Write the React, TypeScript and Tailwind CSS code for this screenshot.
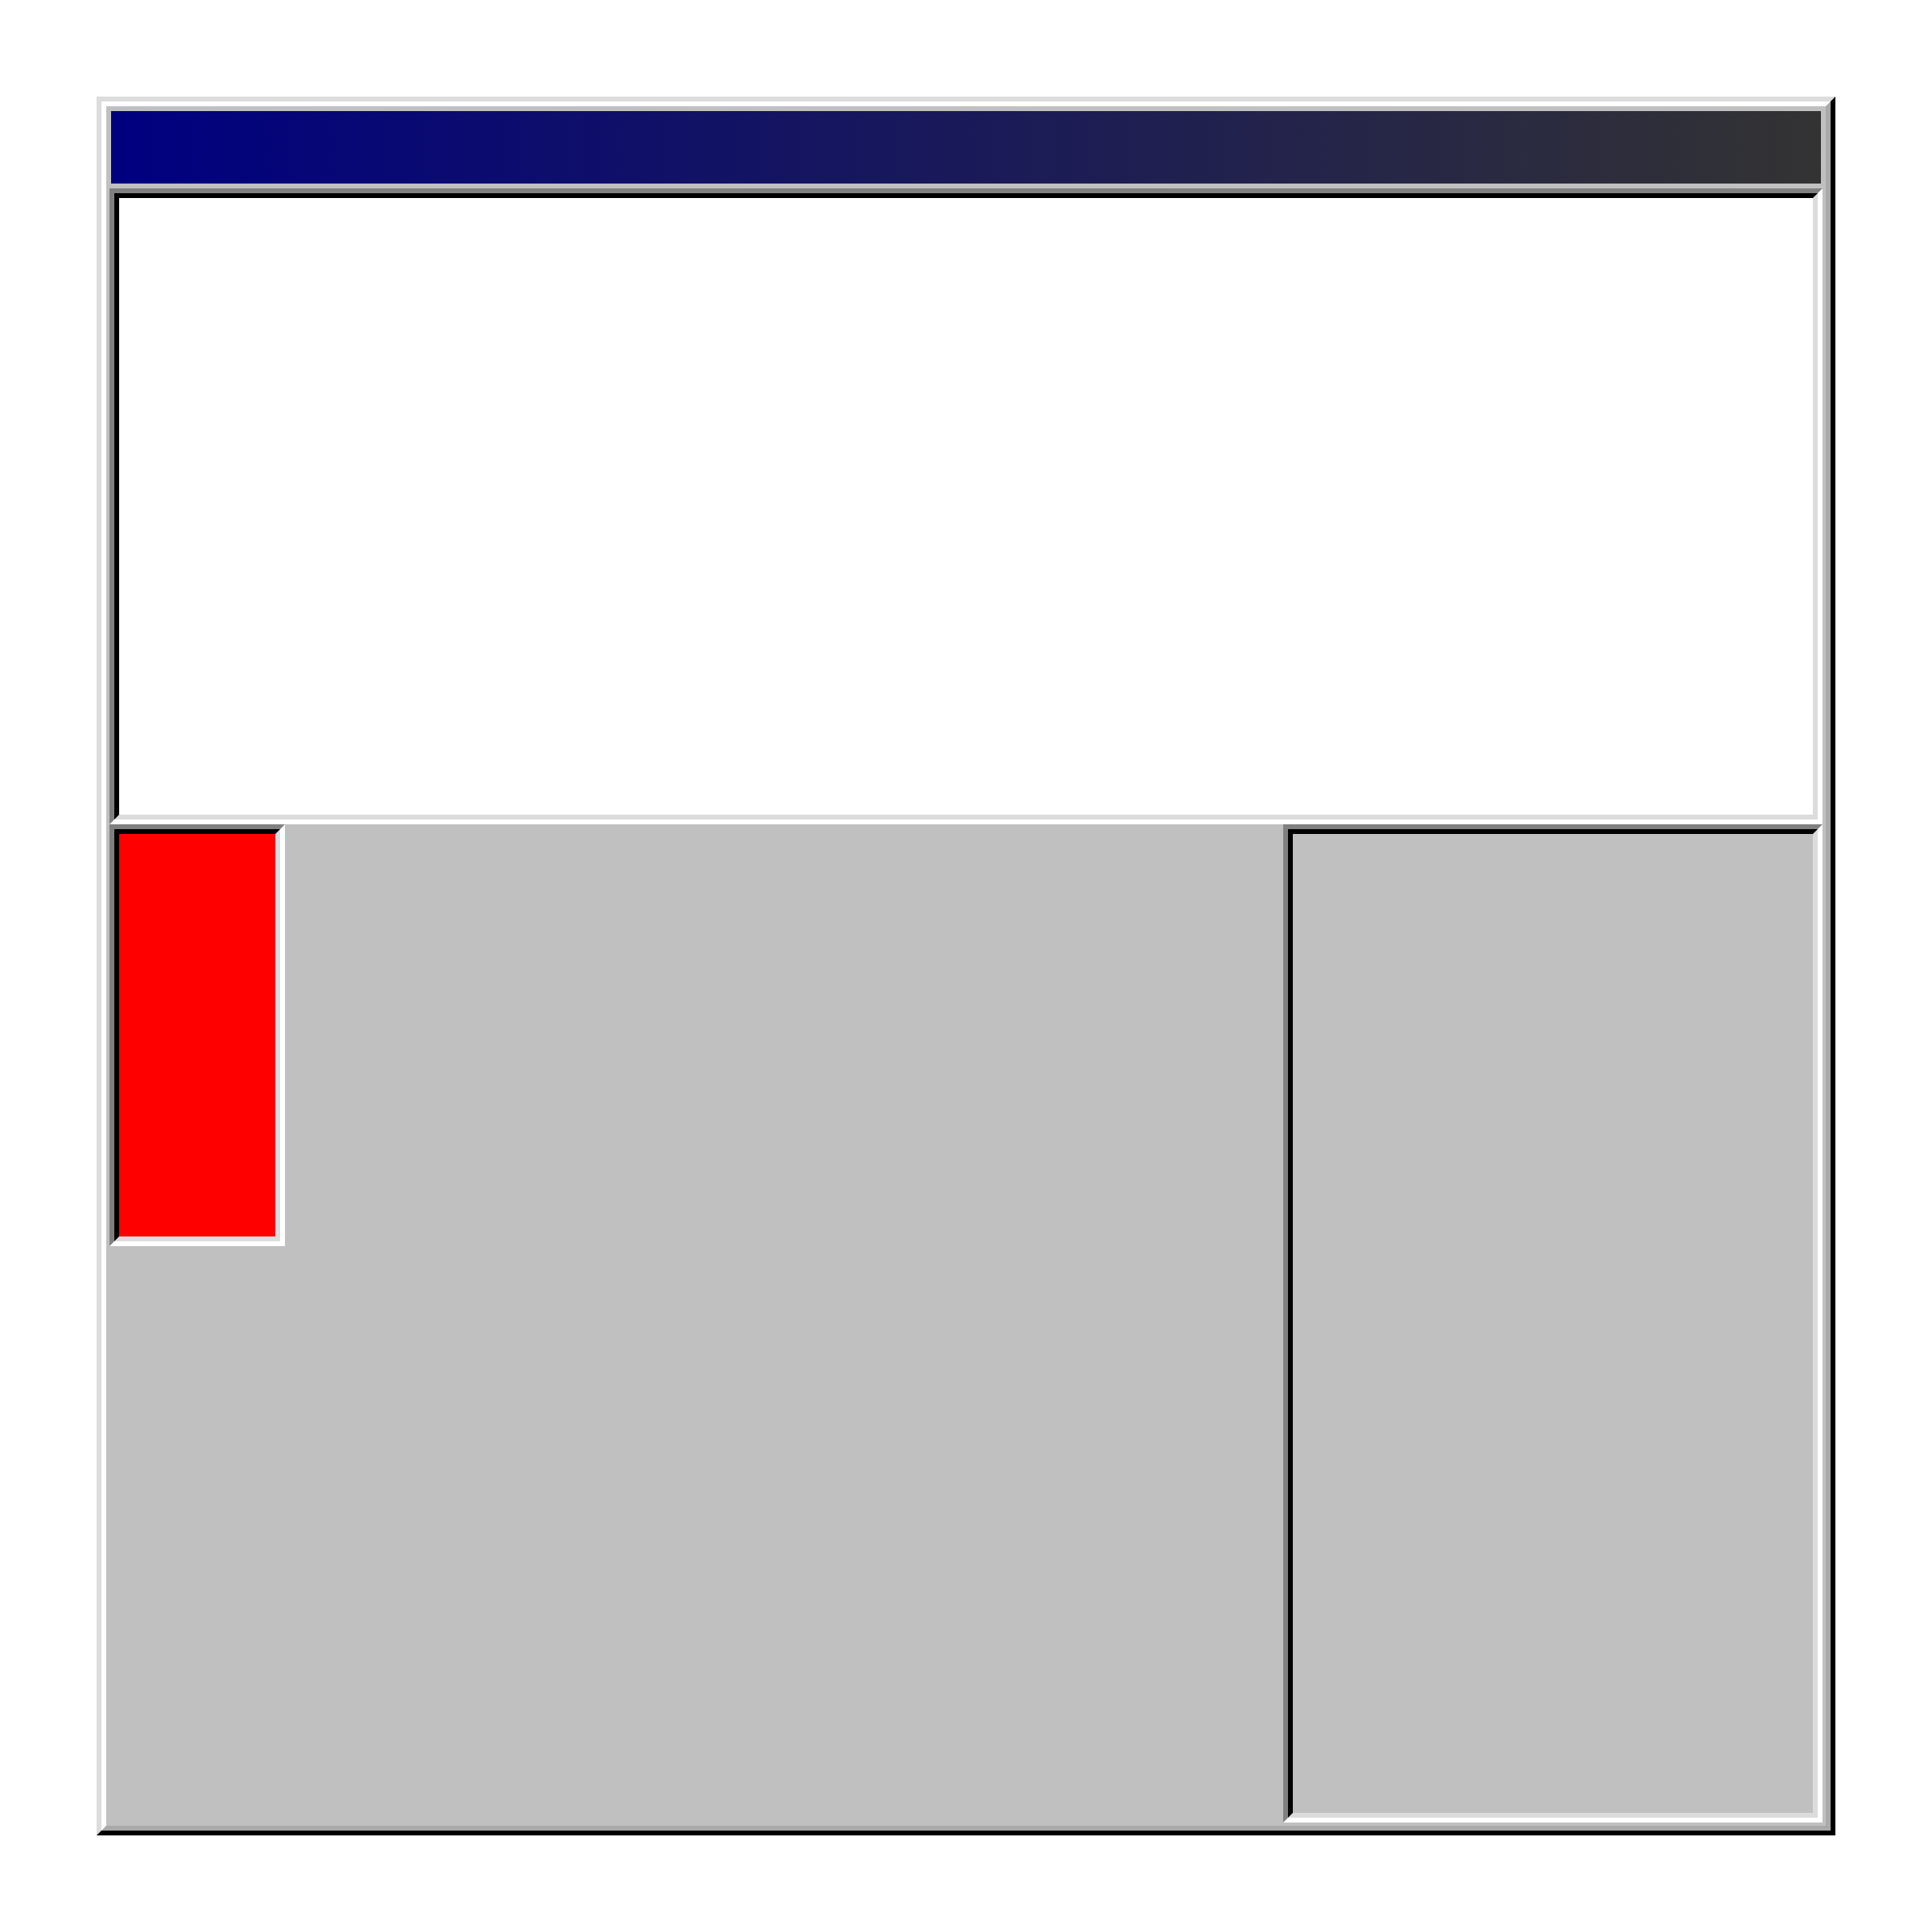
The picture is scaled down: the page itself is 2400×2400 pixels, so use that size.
import React from "react";

function Inset({ className, inner }: { className: string; inner: string }) {
  return (
    <div className={`border-[6px] border-t-[#808080] border-l-[#808080] border-b-white border-r-white ${className}`}>
      <div className={`h-full w-full border-[6px] border-t-black border-l-black border-b-[#dcdcdc] border-r-[#dcdcdc] ${inner}`} />
    </div>
  );
}

export default function App() {
  return (
    <div className="w-[2400px] h-[2400px] bg-white p-[120px]">
      <div className="w-[2160px] h-[2160px] border-[6px] border-t-[#dcdcdc] border-l-[#dcdcdc] border-b-black border-r-black">
        <div className="h-full w-full border-[6px] border-t-white border-l-white border-b-[#a9a9a9] border-r-[#a9a9a9]">
          <div className="h-full w-full bg-[#c0c0c0] p-[4px] flex flex-col">
            <div className="mx-[2px] mt-[2px] h-[90px] shrink-0 bg-[linear-gradient(to_right,#000080,#333333)]" />
            <Inset className="mt-[6px] h-[790px] shrink-0" inner="bg-white" />
            <div className="flex justify-between items-start">
              <Inset className="w-[218px] h-[524px]" inner="bg-[#ff0000]" />
              <Inset className="w-[670px] h-[1240px]" inner="bg-[#c0c0c0]" />
            </div>
          </div>
        </div>
      </div>
    </div>
  );
}
